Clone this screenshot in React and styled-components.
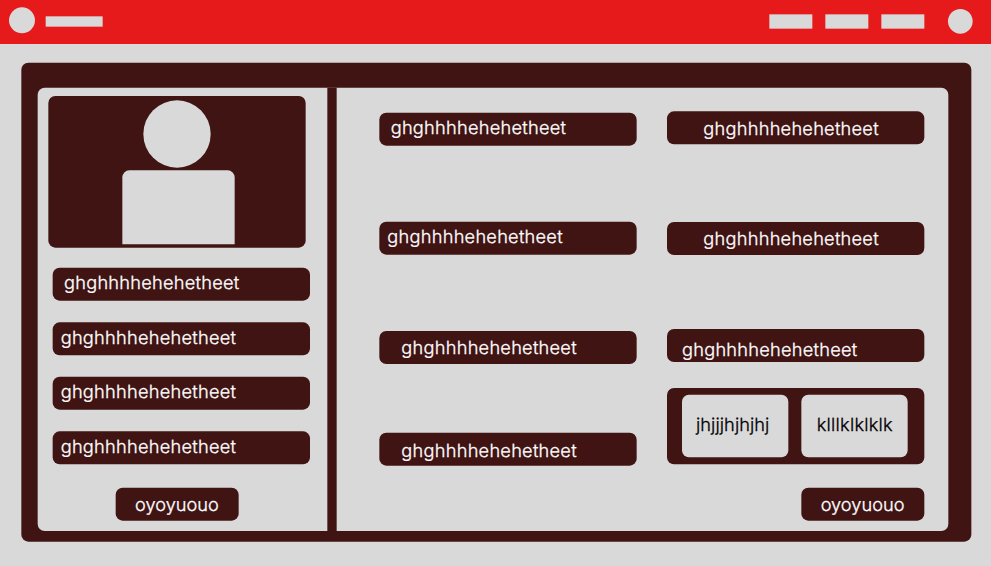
import React from 'react';
import styled, { createGlobalStyle, css } from 'styled-components';

const RED = '#e61a1a';
const DARK = '#411414';
const GREY = '#d9d9d9';

const GlobalStyle = createGlobalStyle`
  *, *::before, *::after { box-sizing: border-box; }
  html, body { margin: 0; background: ${GREY}; overflow: hidden; }
`;

const labelText = css`
  font: 300 54.6px/66px Inter, "Liberation Sans", sans-serif;
  letter-spacing: ${(p) => p.$track ?? 0.75}px;
  text-rendering: geometricPrecision;
  -webkit-text-stroke: 0.9px currentColor;
  white-space: nowrap;
`;

const Viewport = styled.div`
  width: 991px;
  height: 566px;
  overflow: hidden;
`;

/* The artboard is laid out at three times its display size and scaled down. */
const Artboard = styled.div`
  width: 2973px;
  height: 1698px;
  display: flex;
  flex-direction: column;
  background: ${GREY};
  transform: scale(0.333333);
  transform-origin: 0 0;
`;

const Header = styled.header`
  height: 132px;
  flex: none;
  display: flex;
  align-items: flex-start;
  background: ${RED};
  padding: 0 55px 0 27px;
`;

const Dot = styled.div`
  width: ${(p) => p.$size}px;
  height: ${(p) => p.$size}px;
  margin-top: ${(p) => p.$top}px;
  border-radius: 50%;
  background: ${GREY};
`;

const BrandBar = styled.div`
  width: 171px;
  height: 31px;
  margin: 49px auto 0 32px;
  background: ${GREY};
`;

const Nav = styled.nav`
  display: flex;
  gap: 39px;
  margin: 43px 71px 0 0;
`;

const NavItem = styled.div`
  width: 129px;
  height: 43px;
  background: ${GREY};
`;

const Frame = styled.main`
  width: 2850px;
  height: 1437px;
  margin: 56px 0 0 64px;
  padding: 75px 0 0 49px;
  border-radius: 21px;
  background: ${DARK};
`;

const Sheet = styled.div`
  width: 2732px;
  height: 1330px;
  display: flex;
  border-radius: 21px;
  background: ${GREY};
`;

const Sidebar = styled.aside`
  width: 869px;
  flex: none;
  display: flex;
  flex-direction: column;
  padding: 25px 0 0 32px;
`;

const Divider = styled.div`
  width: 28px;
  flex: none;
  background: ${DARK};
`;

const Photo = styled.div`
  width: 772px;
  height: 455px;
  display: flex;
  flex-direction: column;
  align-items: center;
  padding-top: 13px;
  border-radius: 21px;
  background: ${DARK};
`;

const Head = styled.div`
  width: 202px;
  height: 202px;
  border-radius: 50%;
  background: ${GREY};
`;

const Torso = styled.div`
  width: 337px;
  height: 222px;
  margin: 8px 0 0 9px;
  border-radius: 21px 21px 0 0;
  background: ${GREY};
`;

const PillList = styled.div`
  display: flex;
  flex-direction: column;
  gap: 64.6px;
  margin: 60px 0 0 13px;
`;

const Pill = styled.div`
  width: 772px;
  height: 99px;
  flex: none;
  margin-top: ${(p) => p.$gap || 0}px;
  padding: ${(p) => p.$y}px 0 0 ${(p) => p.$x}px;
  border-radius: 21px;
  background: ${DARK};
  color: #fff;
  ${labelText}
`;

const Button = styled.button`
  width: 369px;
  height: 99px;
  flex: none;
  align-self: ${(p) => p.$align};
  margin: ${(p) => p.$margin};
  padding: 17px 0 0 58px;
  display: flex;
  align-items: flex-start;
  border: 0;
  border-radius: 21px;
  background: ${DARK};
  color: #fff;
  ${labelText}
`;

const Content = styled.section`
  display: flex;
  gap: 91px;
  padding-left: 128px;
`;

const Column = styled.div`
  width: 772px;
  display: flex;
  flex-direction: column;
`;

const CardTray = styled.div`
  width: 772px;
  height: 229px;
  flex: none;
  display: flex;
  gap: 39px;
  margin-top: 78px;
  padding: 20px 0 0 45px;
  border-radius: 21px;
  background: ${DARK};
`;

const Card = styled.div`
  width: 319px;
  height: 188px;
  flex: none;
  padding: 57px 0 0 ${(p) => p.$x}px;
  border-radius: 21px;
  background: ${GREY};
  color: #000;
  ${labelText}
`;

const LABEL = 'ghghhhhehehetheet';

const sidebarPills = [
  { x: 34, y: 12 },
  { x: 24, y: 12 },
  { x: 24, y: 12 },
  { x: 24, y: 12 },
];

const middlePills = [
  { gap: 75, x: 34, y: 12 },
  { gap: 228, x: 24, y: 12 },
  { gap: 229, x: 66, y: 18 },
  { gap: 206, x: 66, y: 21 },
];

const rightPills = [
  { gap: 71, x: 109, y: 20 },
  { gap: 233, x: 109, y: 17 },
  { gap: 222, x: 45, y: 30 },
];

const renderPills = (pills) =>
  pills.map((p, i) => (
    <Pill key={i} $gap={p.gap} $x={p.x} $y={p.y}>{LABEL}</Pill>
  ));

export default function App() {
  return (
    <Viewport>
      <GlobalStyle />
      <Artboard>
        <Header>
          <Dot $size={78} $top={22} />
          <BrandBar />
          <Nav>
            <NavItem />
            <NavItem />
            <NavItem />
          </Nav>
          <Dot $size={74} $top={27} />
        </Header>
        <Frame>
          <Sheet>
            <Sidebar>
              <Photo>
                <Head />
                <Torso />
              </Photo>
              <PillList>{renderPills(sidebarPills)}</PillList>
              <Button $align="flex-start" $margin="70px 0 0 202px" $track={0}>oyoyuouo</Button>
            </Sidebar>
            <Divider />
            <Content>
              <Column>{renderPills(middlePills)}</Column>
              <Column>
                {renderPills(rightPills)}
                <CardTray>
                  <Card $x={42} $track={0.2}>jhjjjhjhjhj</Card>
                  <Card $x={46}>klllklklklk</Card>
                </CardTray>
                <Button $align="flex-end" $margin="70px 0 0" $track={0}>oyoyuouo</Button>
              </Column>
            </Content>
          </Sheet>
        </Frame>
      </Artboard>
    </Viewport>
  );
}
